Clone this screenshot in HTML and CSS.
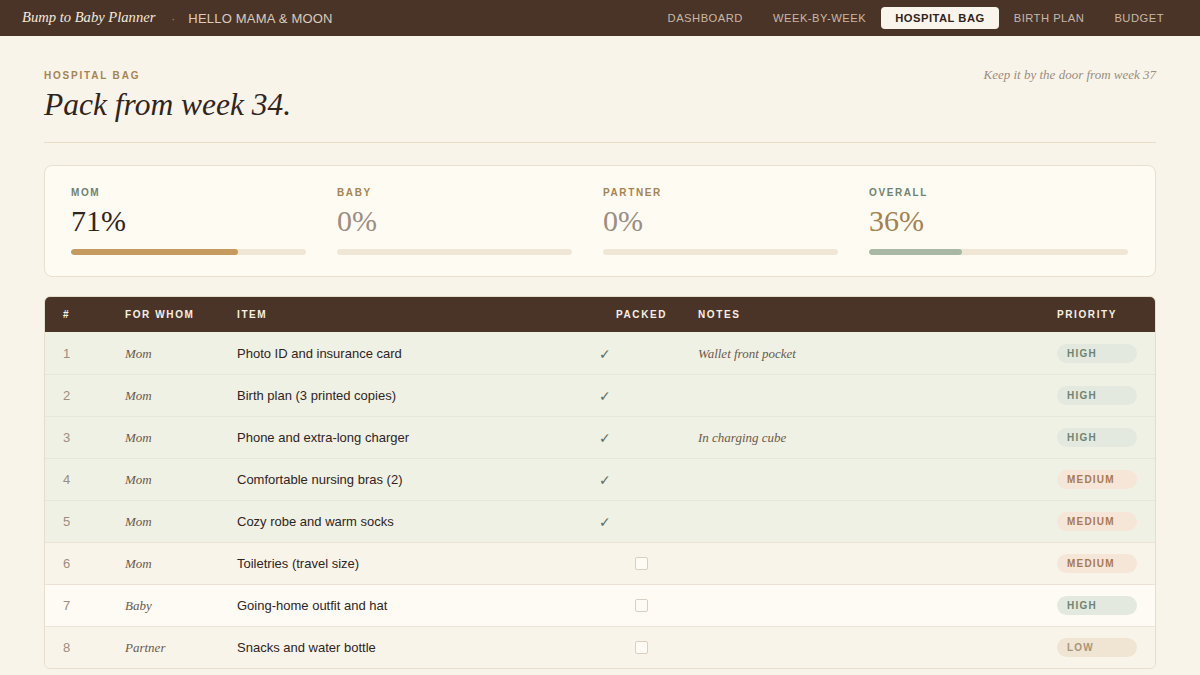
FILE: index.html
```html
<!DOCTYPE html>
<html lang="en">
<head>
    <meta charset="UTF-8">
    <meta name="viewport" content="width=device-width, initial-scale=1.0">
    <title>Hospital Bag - Bump to Baby Planner</title>
    <link rel="stylesheet" href="styles.css">
</head>
<body>
    <header class="topbar">
        <div class="brand">
            <span class="brand-name">Bump to Baby Planner</span>
            <span class="brand-dot">·</span>
            <span class="brand-sub">HELLO MAMA &amp; MOON</span>
        </div>
        <nav class="nav">
            <a href="#">DASHBOARD</a>
            <a href="#">WEEK-BY-WEEK</a>
            <a href="#" class="active">HOSPITAL BAG</a>
            <a href="#">BIRTH PLAN</a>
            <a href="#">BUDGET</a>
        </nav>
    </header>

    <main class="page">
        <div class="page-head">
            <div>
                <div class="eyebrow">HOSPITAL BAG</div>
                <h1>Pack from week 34.</h1>
            </div>
            <div class="aside">Keep it by the door from week 37</div>
        </div>

        <section class="stats">
            <div class="stat">
                <div class="stat-label sage">MOM</div>
                <div class="stat-value dark">71%</div>
                <div class="bar"><div class="fill gold" style="width: 71%;"></div></div>
            </div>
            <div class="stat">
                <div class="stat-label tan">BABY</div>
                <div class="stat-value muted">0%</div>
                <div class="bar"><div class="fill gold" style="width: 0%;"></div></div>
            </div>
            <div class="stat">
                <div class="stat-label tan">PARTNER</div>
                <div class="stat-value muted">0%</div>
                <div class="bar"><div class="fill gold" style="width: 0%;"></div></div>
            </div>
            <div class="stat">
                <div class="stat-label sage">OVERALL</div>
                <div class="stat-value brass">36%</div>
                <div class="bar"><div class="fill green" style="width: 36%;"></div></div>
            </div>
        </section>

        <div class="table-wrap">
            <table class="bag">
                <colgroup>
                    <col style="width: 62px;">
                    <col style="width: 112px;">
                    <col style="width: 379px;">
                    <col style="width: 82px;">
                    <col style="width: 359px;">
                    <col style="width: 118px;">
                </colgroup>
                <thead>
                    <tr>
                        <th>#</th>
                        <th>FOR WHOM</th>
                        <th>ITEM</th>
                        <th>PACKED</th>
                        <th>NOTES</th>
                        <th>PRIORITY</th>
                    </tr>
                </thead>
                <tbody>
                    <tr class="packed">
                        <td class="num">1</td>
                        <td class="who">Mom</td>
                        <td>Photo ID and insurance card</td>
                        <td class="tick"><span class="check">✓</span></td>
                        <td class="note">Wallet front pocket</td>
                        <td><span class="pill high">HIGH</span></td>
                    </tr>
                    <tr class="packed">
                        <td class="num">2</td>
                        <td class="who">Mom</td>
                        <td>Birth plan (3 printed copies)</td>
                        <td class="tick"><span class="check">✓</span></td>
                        <td class="note"></td>
                        <td><span class="pill high">HIGH</span></td>
                    </tr>
                    <tr class="packed">
                        <td class="num">3</td>
                        <td class="who">Mom</td>
                        <td>Phone and extra-long charger</td>
                        <td class="tick"><span class="check">✓</span></td>
                        <td class="note">In charging cube</td>
                        <td><span class="pill high">HIGH</span></td>
                    </tr>
                    <tr class="packed">
                        <td class="num">4</td>
                        <td class="who">Mom</td>
                        <td>Comfortable nursing bras (2)</td>
                        <td class="tick"><span class="check">✓</span></td>
                        <td class="note"></td>
                        <td><span class="pill medium">MEDIUM</span></td>
                    </tr>
                    <tr class="packed">
                        <td class="num">5</td>
                        <td class="who">Mom</td>
                        <td>Cozy robe and warm socks</td>
                        <td class="tick"><span class="check">✓</span></td>
                        <td class="note"></td>
                        <td><span class="pill medium">MEDIUM</span></td>
                    </tr>
                    <tr class="even">
                        <td class="num">6</td>
                        <td class="who">Mom</td>
                        <td>Toiletries (travel size)</td>
                        <td class="tick"><span class="box"></span></td>
                        <td class="note"></td>
                        <td><span class="pill medium">MEDIUM</span></td>
                    </tr>
                    <tr>
                        <td class="num">7</td>
                        <td class="who">Baby</td>
                        <td>Going-home outfit and hat</td>
                        <td class="tick"><span class="box"></span></td>
                        <td class="note"></td>
                        <td><span class="pill high">HIGH</span></td>
                    </tr>
                    <tr class="even">
                        <td class="num">8</td>
                        <td class="who">Partner</td>
                        <td>Snacks and water bottle</td>
                        <td class="tick"><span class="box"></span></td>
                        <td class="note"></td>
                        <td><span class="pill low">LOW</span></td>
                    </tr>
                </tbody>
            </table>
        </div>
    </main>
</body>
</html>
```

FILE: styles.css
```css
body {
    margin: 0;
    background-color: #f8f4ea;
    font-family: "Liberation Sans", Arial, sans-serif;
    color: #2f241e;
}

.topbar {
    height: 36px;
    background: #4a3428;
    display: flex;
    align-items: center;
    justify-content: space-between;
    padding: 0 21px 0 22px;
}
.brand {
    display: flex;
    align-items: center;
}
.brand-name {
    font-family: "Liberation Serif", serif;
    font-style: italic;
    font-size: 14.6px;
    color: #f3e9da;
    margin-top: -2px;
}
.brand-dot {
    color: #9c8775;
    font-size: 12px;
    margin: 1px 13px 0 16px;
}
.brand-sub {
    font-size: 13px;
    letter-spacing: 0.2px;
    color: #d9ccbc;
    margin-top: 1px;
}
.nav {
    display: flex;
    align-items: center;
}
.nav a {
    font-size: 11.2px;
    letter-spacing: 0.5px;
    color: #c8b8a6;
    text-decoration: none;
    padding: 5px 15px;
    border-radius: 4px;
    line-height: 12px;
}
.nav a.active {
    background: #faf5ec;
    color: #2f241e;
    font-weight: bold;
    padding: 5px 14px;
}

.page {
    padding: 0 44px;
}
.page-head {
    display: flex;
    justify-content: space-between;
    align-items: flex-start;
    padding: 34px 0 17px;
    border-bottom: 1px solid #e9dcc6;
}
.eyebrow {
    font-size: 10px;
    font-weight: bold;
    letter-spacing: 1.8px;
    color: #a6844f;
}
h1 {
    margin: 4px 0 0;
    font-family: "Liberation Serif", serif;
    font-style: italic;
    font-weight: normal;
    font-size: 31.5px;
    line-height: 40px;
    color: #2f241e;
}
.aside {
    font-family: "Liberation Serif", serif;
    font-style: italic;
    font-size: 13px;
    color: #9b8d80;
    margin-top: -3px;
}

.stats {
    margin-top: 22px;
    background: #fefbf3;
    border: 1px solid #e8dfcf;
    border-radius: 8px;
    padding: 21px 27px 21px 26px;
    display: grid;
    grid-template-columns: 266px 266px 266px 1fr;
}
.stat {
    padding-right: 31px;
}
.stat:last-child {
    padding-right: 0;
}
.stat-label {
    font-size: 10px;
    font-weight: bold;
    letter-spacing: 1.6px;
}
.stat-label.sage { color: #6f8470; }
.stat-label.tan { color: #a6844f; }
.stat-value {
    font-family: "Liberation Serif", serif;
    font-size: 30px;
    line-height: 36px;
    margin-top: 5px;
}
.stat-value.dark { color: #2f241e; }
.stat-value.muted { color: #9b8e83; }
.stat-value.brass { color: #a3824f; }
.bar {
    margin-top: 10px;
    height: 6px;
    border-radius: 3px;
    background: #efe6d6;
    overflow: hidden;
}
.fill {
    height: 100%;
    border-radius: 3px;
}
.fill.gold { background: #c49a5e; }
.fill.green { background: #a9b8a4; }

.table-wrap {
    margin-top: 19px;
    border: 1px solid #e6ddcc;
    border-radius: 6px;
    overflow: hidden;
}
.bag {
    width: 100%;
    border-collapse: collapse;
    table-layout: fixed;
}
.bag th {
    background: #4a3428;
    color: #f8efe2;
    font-size: 10px;
    font-weight: bold;
    letter-spacing: 1.6px;
    text-align: left;
    height: 35px;
    padding: 0 18px;
}
.bag td {
    height: 41px;
    padding: 0 18px;
    font-size: 13px;
    border-top: 1px solid #ebe3d4;
    background: #fefbf4;
}
.bag tr.even td {
    background: #f9f4ea;
}
.bag tr.packed td {
    background: #eff1e4;
    border-top-color: #e5e7d9;
}
.bag tbody tr:first-child td {
    border-top-color: #eff1e4;
}
.num {
    color: #9b8d80;
}
.who, .note {
    font-family: "Liberation Serif", serif;
    font-style: italic;
    color: #6a5a4e;
}
.tick {
    padding-left: 1px !important;
}
.check {
    color: #626d5c;
    font-size: 14px;
    font-weight: bold;
    font-family: "DejaVu Sans", sans-serif;
}
.box {
    display: block;
    width: 11px;
    height: 11px;
    margin-left: 36px;
    border: 1px solid #d8cfc2;
    border-radius: 2px;
    background: #fefbf4;
}
.pill {
    display: inline-block;
    width: 80px;
    box-sizing: border-box;
    padding: 0 10px;
    height: 19px;
    line-height: 19px;
    border-radius: 10px;
    font-size: 10px;
    font-weight: bold;
    letter-spacing: 1.2px;
    vertical-align: middle;
}
.pill.high { background: #e4e9df; color: #6f8470; }
.pill.medium { background: #f6e6d8; color: #a87a50; }
.pill.low { background: #efe5d2; color: #a8957a; }
```
